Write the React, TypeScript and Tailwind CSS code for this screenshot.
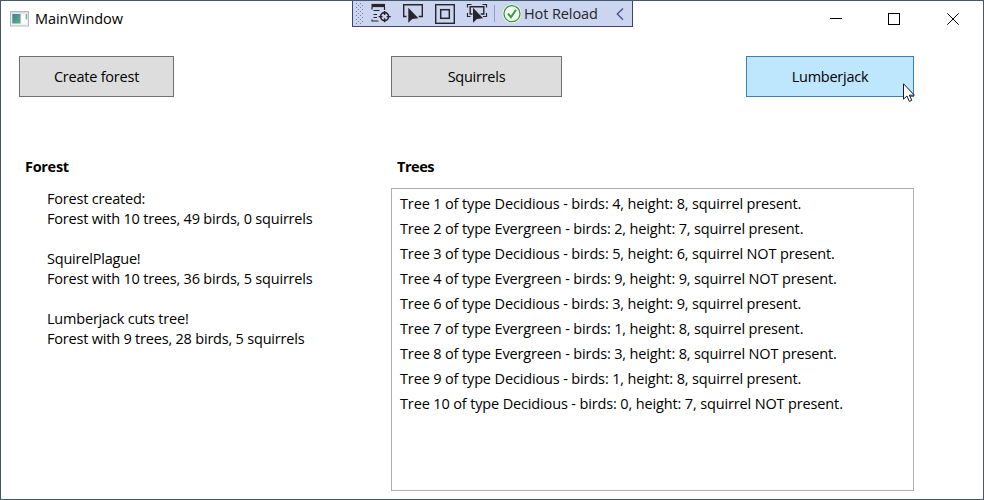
import type { ReactNode } from "react";

const log = [
  "Forest created:",
  "Forest with 10 trees, 49 birds, 0 squirrels",
  "",
  "SquirelPlague!",
  "Forest with 10 trees, 36 birds, 5 squirrels",
  "",
  "Lumberjack cuts tree!",
  "Forest with 9 trees, 28 birds, 5 squirrels",
];

const trees = [
  "Tree 1 of type Decidious - birds: 4, height: 8, squirrel present.",
  "Tree 2 of type Evergreen - birds: 2, height: 7, squirrel present.",
  "Tree 3 of type Decidious - birds: 5, height: 6, squirrel NOT present.",
  "Tree 4 of type Evergreen - birds: 9, height: 9, squirrel NOT present.",
  "Tree 6 of type Decidious - birds: 3, height: 9, squirrel present.",
  "Tree 7 of type Evergreen - birds: 1, height: 8, squirrel present.",
  "Tree 8 of type Evergreen - birds: 3, height: 8, squirrel NOT present.",
  "Tree 9 of type Decidious - birds: 1, height: 8, squirrel present.",
  "Tree 10 of type Decidious - birds: 0, height: 7, squirrel NOT present.",
];

function ToolIcon({ children }: { children: ReactNode }) {
  return (
    <svg width="22" height="23" viewBox="0 0 22 23" fill="none" stroke="#25252b" className="mr-2.5 shrink-0">
      {children}
    </svg>
  );
}

function DebugToolbar() {
  return (
    <div className="absolute left-[351px] top-[-1px] flex h-[27px] w-[281px] items-center border border-[#3b4377] bg-[#ccd5f0]">
      <svg width="8" height="23" viewBox="0 0 8 23" className="ml-[3px] mr-[6px] shrink-0" fill="#7780a5">
        {[1, 5, 9, 13, 17, 21].map((y) => (
          <g key={y}>
            <rect x="0" y={y} width="1" height="1" />
            <rect x="4" y={y} width="1" height="1" />
            <rect x="2" y={y - 2} width="1" height="1" />
            <rect x="6" y={y - 2} width="1" height="1" />
          </g>
        ))}
      </svg>
      <ToolIcon>
        <path d="M1.5 3.5h13.5" strokeWidth="3.2" />
        <path d="M2 5v2.5M14.5 5v3M3.5 8.5h6M3.5 12.5h3.5M2 17.5v2M2 19h6.5M3.5 15.5h3.5" strokeWidth="1.2" />
        <circle cx="14.6" cy="14.6" r="4" strokeWidth="1.6" />
        <path d="M14.6 9v4M14.6 16.2v4M8.6 14.6h4M16.6 14.6h4.2" strokeWidth="1.4" />
      </ToolIcon>
      <ToolIcon>
        <path d="M4.5 14.5H1.7V2.7h18.6v11.8h-3.6" strokeWidth="1.4" />
        <path d="M6.3 5.8v15l3.9-3.7 6.2-.8z" fill="#25252b" stroke="none" />
      </ToolIcon>
      <ToolIcon>
        <rect x="1.7" y="2.7" width="18.6" height="18.6" strokeWidth="1.4" />
        <rect x="6.7" y="7.7" width="8.6" height="8.6" strokeWidth="1.5" />
      </ToolIcon>
      <ToolIcon>
        <path d="M1.5 5.5v-3h4M16.5 2.5h4v3M1.5 11v3.5h3M20.5 11v3.5h-3.5" strokeWidth="1.2" />
        <path d="M6.5 12H4.2V4.7h13.6V12h-3" strokeWidth="1.4" />
        <path d="M7 5.8v15l3.9-3.7 6.2-.8z" fill="#25252b" stroke="none" />
      </ToolIcon>
      <div className="-ml-[4px] h-[17px] w-px shrink-0 bg-[#929ec9]" />
      <svg width="20" height="21" viewBox="0 0 20 21" fill="none" className="ml-[7px] shrink-0">
        <circle cx="10" cy="10.7" r="9.5" fill="#f2f7f3" />
        <circle cx="10" cy="10.7" r="8" stroke="#329a39" strokeWidth="1.3" />
        <path d="m6 10.7 3 3.5 5-7.5" stroke="#329a39" strokeWidth="2" />
      </svg>
      <span className="ml-[2px] whitespace-nowrap text-[14.5px] tracking-[-0.1px] text-[#25252b]">Hot Reload</span>
      <svg width="8" height="14" viewBox="0 0 8 14" fill="none" className="ml-auto mr-2 shrink-0">
        <path d="M7 1.5 1.3 7 7 12.8" stroke="#4b5488" strokeWidth="1.4" />
      </svg>
    </div>
  );
}

export default function App() {
  return (
    <div className="relative flex h-[500px] w-[984px] flex-col overflow-hidden border border-[#44586b] bg-white font-['Open_Sans','Noto_Sans',sans-serif] text-[14.5px] text-black">
      <header className="flex h-[36px] shrink-0 items-center pl-[9px]">
        <svg width="19" height="16" viewBox="0 0 19 16" className="shrink-0">
          <defs>
            <linearGradient id="pane" x1="0" y1="0" x2="1" y2="1">
              <stop offset="0" stopColor="#4779a0" />
              <stop offset="1" stopColor="#5bb47b" />
            </linearGradient>
          </defs>
          <rect x=".5" y=".5" width="18" height="14.5" fill="#f0f1f3" stroke="#b6b8bc" />
          <rect x="1" y="1" width="17" height="1.5" fill="#d9dbde" />
          <rect x="2.3" y="3" width="8.2" height="9.5" fill="url(#pane)" />
          <rect x="11.5" y="3" width="5.5" height="9.5" fill="#fff" />
          <rect x="15.7" y="3" width="1.5" height="5.5" fill="#6fb392" />
        </svg>
        <span className="ml-[6px] tracking-[-0.05px]">MainWindow</span>
        <div className="ml-auto flex items-center pr-[24px]">
          <svg width="130" height="14" viewBox="0 0 130 14" fill="none" stroke="#000">
            <path d="M1 6.5h12" />
            <rect x="59.5" y="1.5" width="11" height="11" />
            <path d="m118.3 1.3 11.4 11.4M129.7 1.3l-11.4 11.4" />
          </svg>
        </div>
      </header>

      <div className="mt-[19px] flex h-[41px] shrink-0 pl-[18px]">
        <button className="w-[155px] border border-[#707070] bg-[#dddddd] tracking-[-0.22px]">Create forest</button>
        <button className="ml-[217px] w-[171px] border border-[#707070] bg-[#dddddd] tracking-[-0.25px]">Squirrels</button>
        <button className="ml-[184px] w-[168px] border border-[#3c7fb1] bg-[#bee6fd] tracking-[-0.25px]">Lumberjack</button>
      </div>

      <main className="mt-[60px] flex">
        <section className="w-[372px] pl-6">
          <h2 className="h-[32px] leading-5 font-bold tracking-[-0.3px]">Forest</h2>
          <div className="pl-[22px] leading-5 tracking-[-0.2px]">
            {log.map((line, i) => (
              <p key={i} className="h-5 whitespace-nowrap">{line}</p>
            ))}
          </div>
        </section>
        <section className="ml-[18px] w-[523px]">
          <h2 className="h-[31px] pl-[6px] leading-5 font-bold tracking-[-0.45px]">Trees</h2>
          <ul className="h-[303px] border border-[#abadb3] pl-2 pt-[2px] tracking-[-0.14px]">
            {trees.map((tree) => (
              <li key={tree} className="h-[25px] leading-[25px] whitespace-nowrap">{tree}</li>
            ))}
          </ul>
        </section>
      </main>

      <DebugToolbar />
      <svg width="13" height="20" viewBox="0 0 13 20" className="absolute left-[902px] top-[82px]">
        <path d="M.5.8v15.4l3.4-3.2 2.4 5.4 2.5-1.1-2.4-5.1h5z" fill="#fff" stroke="#16192c" />
      </svg>
    </div>
  );
}
